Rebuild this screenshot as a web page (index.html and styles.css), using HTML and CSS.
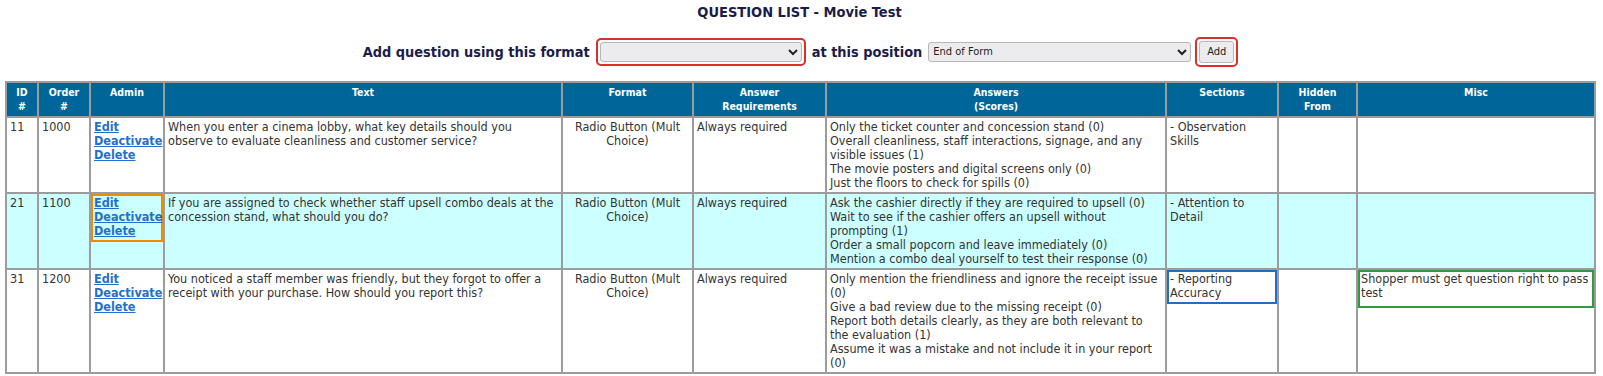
FILE: index.html
```html
<!DOCTYPE html>
<html lang="en">
<head>
    <meta charset="UTF-8">
    <title>Question List - Movie Test</title>
    <link rel="stylesheet" href="styles.css">
</head>
<body>
    <h1 class="page-title">QUESTION LIST - Movie Test</h1>
    <form class="add-form">
        <label for="fmt">Add question using this format</label>
        <span class="mark mark-red">
            <select id="fmt" class="sel sel-format">
                <option></option>
            </select>
        </span>
        <label for="pos">at this position</label>
        <select id="pos" class="sel sel-pos">
            <option>End of Form</option>
        </select>
        <span class="mark mark-red">
            <button type="button" class="add-btn">Add</button>
        </span>
    </form>

    <table class="qlist">
        <thead>
            <tr>
                <th class="c-id">ID<br>#</th>
                <th class="c-order">Order<br>#</th>
                <th class="c-admin">Admin</th>
                <th class="c-text">Text</th>
                <th class="c-format">Format</th>
                <th class="c-req">Answer<br>Requirements</th>
                <th class="c-ans">Answers<br>(Scores)</th>
                <th class="c-sec">Sections</th>
                <th class="c-hid">Hidden<br>From</th>
                <th class="c-misc">Misc</th>
            </tr>
        </thead>
        <tbody>
            <tr>
                <td>11</td>
                <td>1000</td>
                <td class="admin">
                    <a href="#">Edit</a><br>
                    <a href="#">Deactivate</a><br>
                    <a href="#">Delete</a>
                </td>
                <td>When you enter a cinema lobby, what key details should you observe to evaluate cleanliness and customer service?</td>
                <td class="center">Radio Button (Mult Choice)</td>
                <td>Always required</td>
                <td>Only the ticket counter and concession stand (0)<br>Overall cleanliness, staff interactions, signage, and any visible issues (1)<br>The movie posters and digital screens only (0)<br>Just the floors to check for spills (0)</td>
                <td>- Observation Skills</td>
                <td></td>
                <td></td>
            </tr>
            <tr class="hl">
                <td>21</td>
                <td>1100</td>
                <td class="admin">
                    <div class="mark-box mark-orange">
                        <a href="#">Edit</a><br>
                        <a href="#">Deactivate</a><br>
                        <a href="#">Delete</a>
                    </div>
                </td>
                <td>If you are assigned to check whether staff upsell combo deals at the concession stand, what should you do?</td>
                <td class="center">Radio Button (Mult Choice)</td>
                <td>Always required</td>
                <td>Ask the cashier directly if they are required to upsell (0)<br>Wait to see if the cashier offers an upsell without prompting (1)<br>Order a small popcorn and leave immediately (0)<br>Mention a combo deal yourself to test their response (0)</td>
                <td>- Attention to Detail</td>
                <td></td>
                <td></td>
            </tr>
            <tr>
                <td>31</td>
                <td>1200</td>
                <td class="admin">
                    <a href="#">Edit</a><br>
                    <a href="#">Deactivate</a><br>
                    <a href="#">Delete</a>
                </td>
                <td>You noticed a staff member was friendly, but they forgot to offer a receipt with your purchase. How should you report this?</td>
                <td class="center">Radio Button (Mult Choice)</td>
                <td>Always required</td>
                <td>Only mention the friendliness and ignore the receipt issue (0)<br>Give a bad review due to the missing receipt (0)<br>Report both details clearly, as they are both relevant to the evaluation (1)<br>Assume it was a mistake and not include it in your report (0)</td>
                <td><div class="mark-box mark-blue">- Reporting Accuracy</div></td>
                <td></td>
                <td><div class="mark-box mark-green">Shopper must get question right to pass test</div></td>
            </tr>
        </tbody>
    </table>
</body>
</html>
```

FILE: styles.css
```css
* {
    box-sizing: border-box;
}
body {
    margin: 0;
    padding: 3px 9px 0 5px;
    font-family: Tahoma, "DejaVu Sans Condensed", sans-serif;
    font-size: 12.5px;
    color: #333;
    background: #fff;
}
.page-title {
    margin: 0;
    text-align: center;
    font-size: 14.5px;
    line-height: 18px;
    color: #1c1c4a;
}
.add-form {
    margin: 17px 0 16px;
    display: flex;
    justify-content: center;
    align-items: center;
    gap: 4px;
    height: 27px;
    font-size: 14.4px;
    font-weight: bold;
    color: #1c1c4a;
}
.add-form label {
    margin: 0 2px;
}
.mark {
    display: inline-flex;
    padding: 2px;
    border-radius: 5px;
}
.mark-red {
    border: 2px solid #d9302c;
}
.sel {
    height: 20px;
    font-family: Tahoma, "DejaVu Sans Condensed", sans-serif;
    font-size: 11px;
    color: #222;
    background-color: #ececef;
    border: 1px solid #b8b8bc;
    border-radius: 3px;
}
.sel-format {
    width: 202px;
}
.sel-pos {
    width: 263px;
}
.add-btn {
    height: 22px;
    width: 35px;
    padding: 0;
    font-family: Tahoma, "DejaVu Sans Condensed", sans-serif;
    font-size: 11px;
    color: #222;
    background: #ececef;
    border: 1px solid #b8b8bc;
    border-radius: 3px;
}

.qlist {
    width: 1589px;
    table-layout: fixed;
    border-collapse: collapse;
    border: 2px solid #a5a5a5;
}
.qlist th,
.qlist td {
    border: 2px solid #9c9c9c;
    padding: 2px 3px;
    vertical-align: top;
    line-height: 14px;
    text-align: left;
}
.qlist th {
    background: #00669a;
    color: #fff;
    font-size: 10.5px;
    text-align: center;
    padding: 2px 2px 3px;
}
.qlist .center {
    text-align: center;
}
.qlist tr.hl td {
    background: #ccffff;
}
.c-id { width: 32px; }
.c-order { width: 52px; }
.c-admin { width: 74px; }
.c-text { width: 398px; }
.c-format { width: 131px; }
.c-req { width: 133px; }
.c-ans { width: 340px; }
.c-sec { width: 112px; }
.c-hid { width: 79px; }
.c-misc { width: 238px; }

.admin a {
    color: #1f6fd0;
    font-weight: bold;
}
.mark-box {
    margin: -2px -3px 0;
    padding: 0 1px;
    border: 2px solid;
}
.mark-orange {
    border-color: #f08a00;
    padding-bottom: 2px;
}
.mark-blue {
    border-color: #1f6fc8;
    padding-bottom: 2px;
}
.mark-green {
    border-color: #2f9a3e;
    padding-bottom: 6px;
}
```
